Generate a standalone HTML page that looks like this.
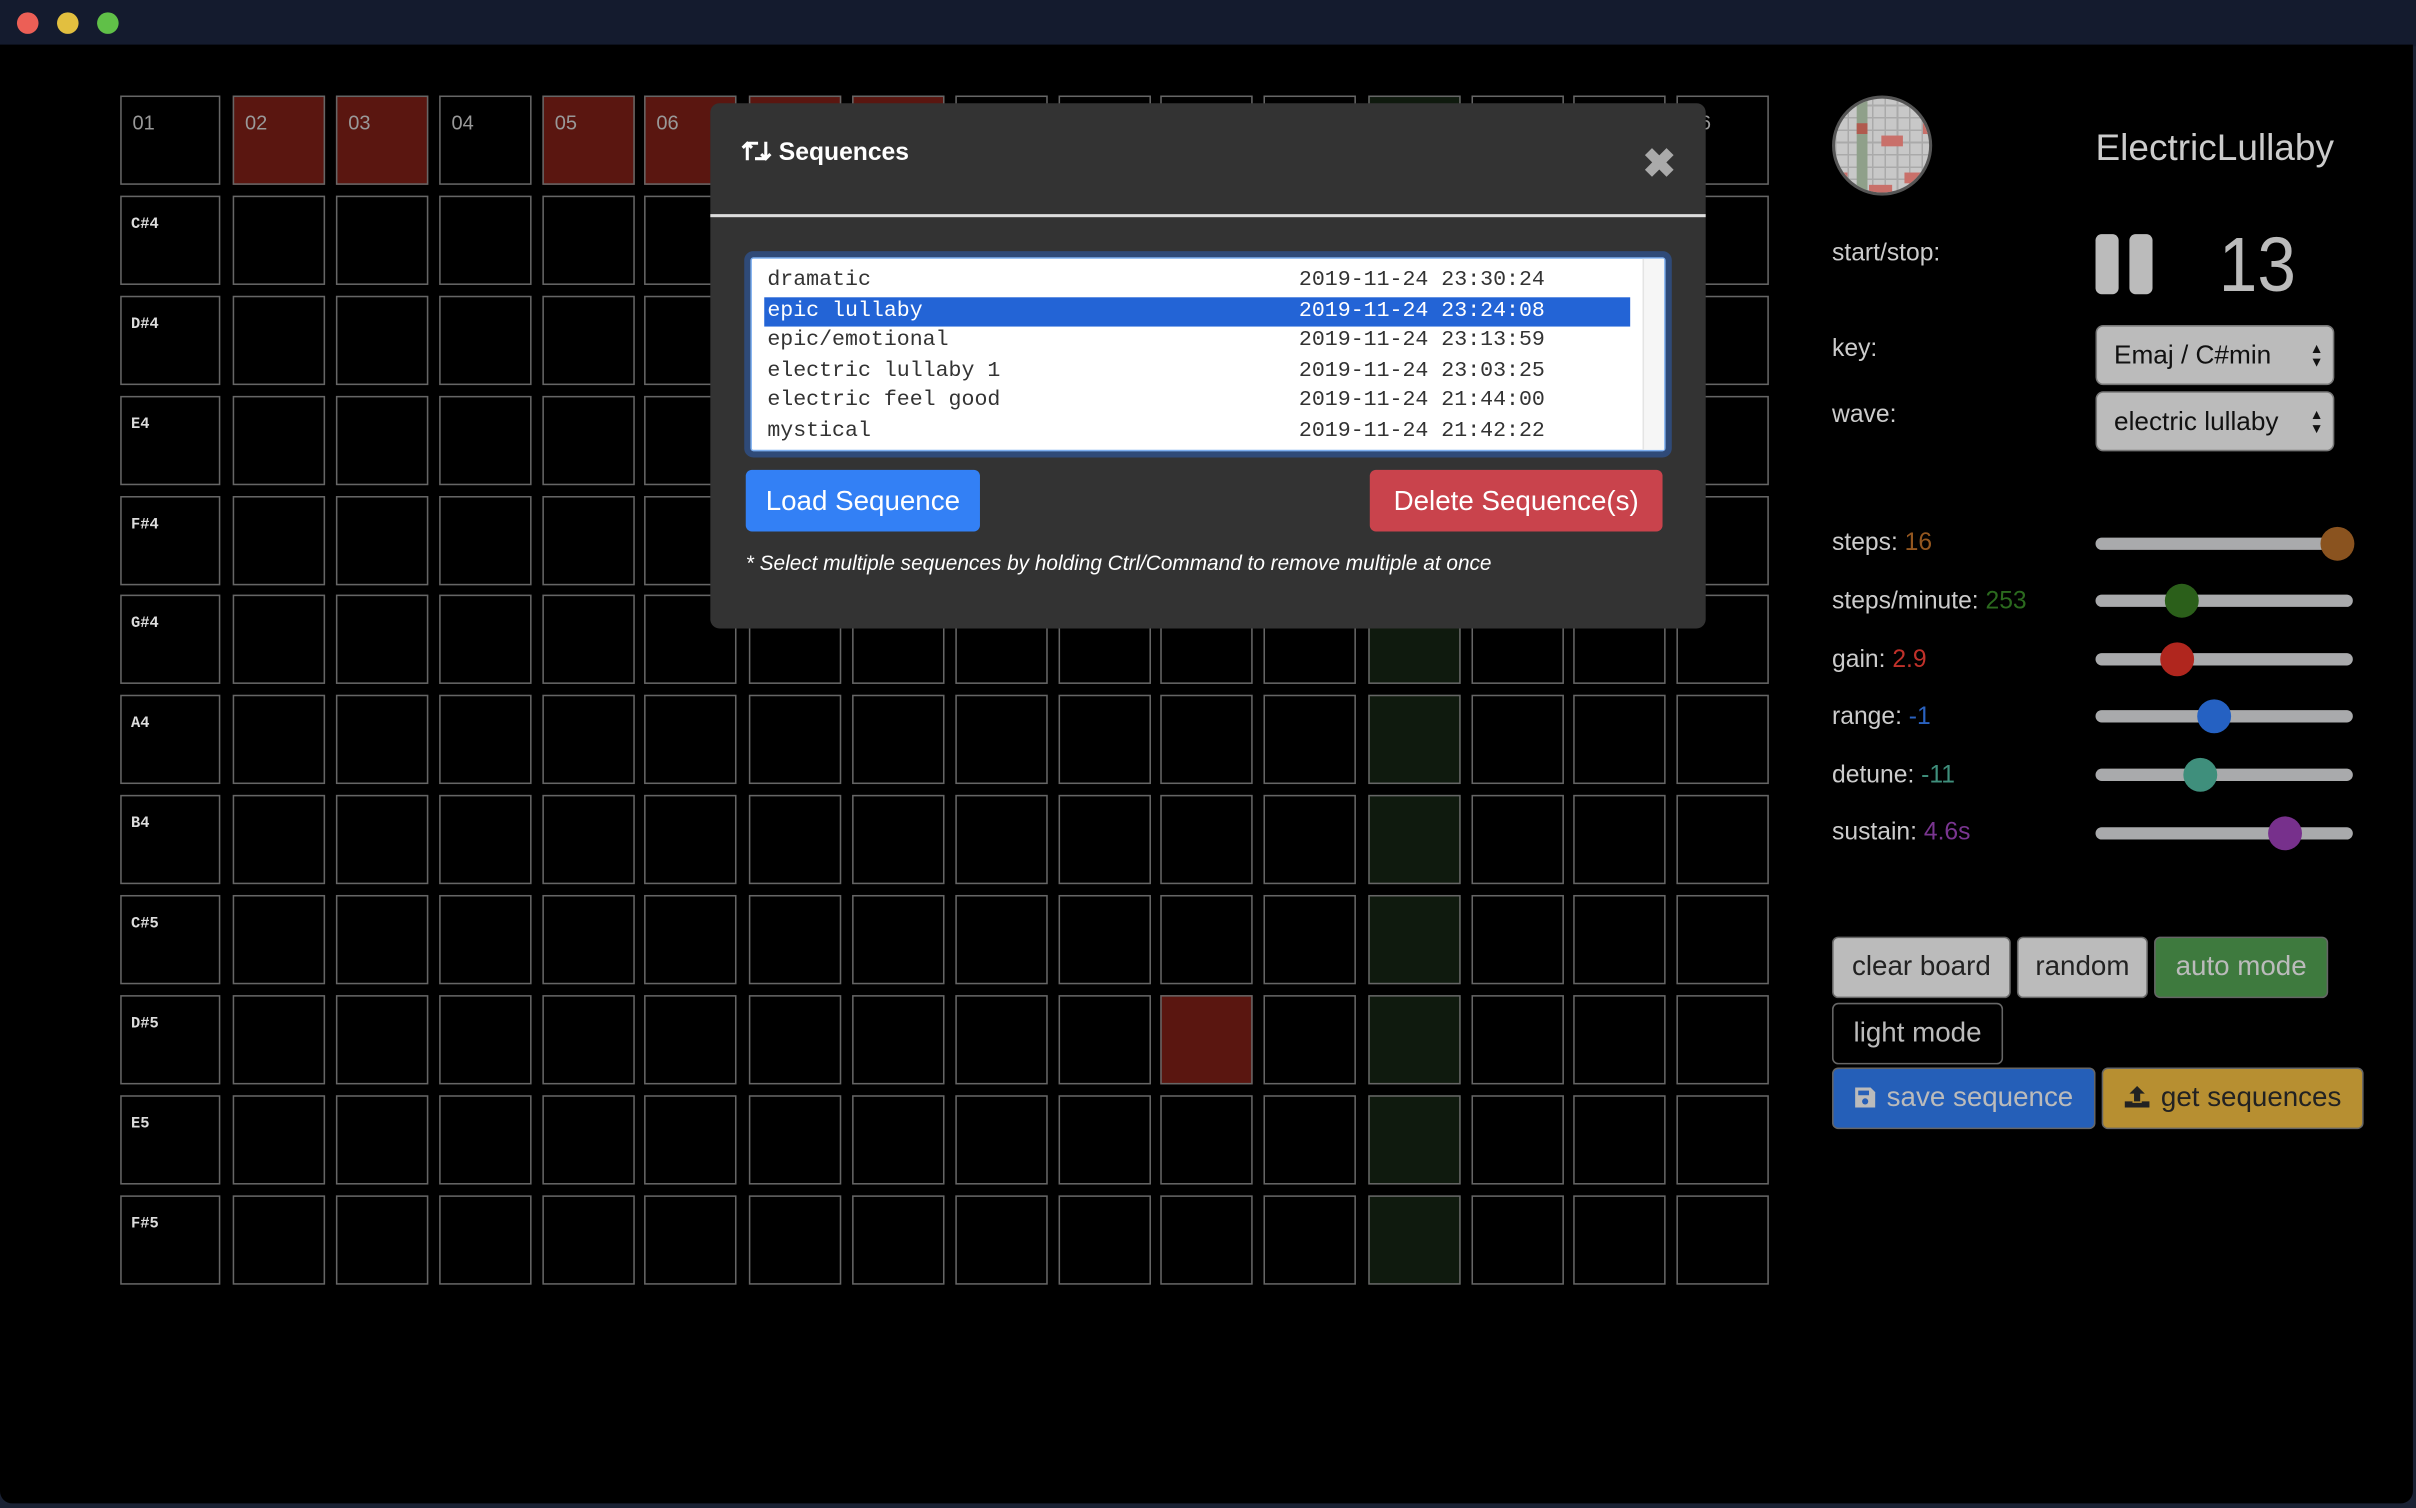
<!DOCTYPE html>
<html><head><meta charset="utf-8">
<style>
*{box-sizing:border-box;margin:0;padding:0}
html,body{width:2416px;height:1508px;overflow:hidden;background:#1a2133}
#s{position:absolute;left:0;top:0;width:1568px;height:979px;transform:scale(1.54082,1.5404);transform-origin:0 0;font-family:"Liberation Sans",sans-serif}
.tb{position:absolute;left:0;top:0;width:1568px;height:30px;background:#141b2e}
.dot{position:absolute;top:8px;width:14px;height:14px;border-radius:50%}
.win{position:absolute;left:0;top:29px;width:1566px;height:947px;background:#000;border-radius:0 0 8px 8px}
.c{position:absolute;border:1.4px solid #666;background:#000}
.hd{color:#999;font-size:13px;padding:9px 0 0 7px}
.nl{color:#ddd;font-size:10px;font-weight:bold;font-family:"Liberation Mono",monospace;padding:13px 0 0 6px}
.r{background:#5a1610}.g{background:#0f1a0e}
.modal{position:absolute;left:461px;top:67px;width:646px;height:341px;background:#333;border-radius:6px}
.lb{position:absolute;left:22px;top:96px;width:602px;height:134px;border:3px solid #2f4a78;border-radius:6px;background:#2f4a78}
.lbi{position:absolute;left:1px;top:1px;right:1px;bottom:1px;background:#fff;border:1px solid #7fb0f0;border-radius:2px;font-family:"Liberation Mono",monospace;font-size:14px;color:#333;padding:5px 0 0 8px}
.row{height:19.6px;line-height:19.6px;position:relative;width:562px;padding-left:2px}
.row span{position:absolute;left:347px}
.sel{background:#2364d6;color:#fff}
.btn{position:absolute;border-radius:4px;font-size:18px;text-align:center;line-height:40px}
.lab{position:absolute;left:1189px;color:#ccc;font-size:16px}
.trk{position:absolute;left:1360px;width:167px;height:8px;border-radius:4px;background:#a9aaac}
.th{position:absolute;width:22px;height:22px;border-radius:50%;top:-7px}
.sl{position:absolute;left:1360px;width:155px;height:39px;background:#bbb;border:1.5px solid #777;border-radius:5px;color:#111;font-size:17px;line-height:37px;padding-left:11px}
.ar{position:absolute;right:6px;top:10px;font-size:9px;line-height:9px;color:#111}
.b2{position:absolute;height:40px;border:1.5px solid #666;border-radius:4px;font-size:18px;line-height:37px;text-align:center}
.b2 svg{vertical-align:-2px;margin-right:6px}
</style></head><body><div id="s">
<div class="tb"><div class="dot" style="left:11px;background:#ec5f56"></div><div class="dot" style="left:37px;background:#e2bf3f"></div><div class="dot" style="left:63px;background:#60c048"></div></div>
<div class="win"></div>
<div id="grid"></div>
<script>
var cx=[151,218,285,352,418,486,553,620,687,753,820,888,955,1021,1088];
var ry=[62,127,192,257,322,386,451,516,581,646,711,776];
var notes=["C#4","D#4","E4","F#4","G#4","A4","B4","C#5","D#5","E5","F#5"];
var h="";
for(var r=0;r<12;r++){
 h+='<div class="c '+(r==0?'hd':'nl')+'" style="left:78px;top:'+ry[r]+'px;width:65px;height:58px">'+(r==0?'01':notes[r-1])+'</div>';
 for(var i=0;i<15;i++){
  var cls="c";
  if(r==0&&[0,1,3,4,5,6].indexOf(i)>=0)cls+=" r";
  if(i==11)cls+=" g";
  if(r==9&&i==9)cls+=" r";
  var t=r==0?String(i+2).padStart(2,"0"):"";
  h+='<div class="'+cls+(r==0?' hd':'')+'" style="left:'+cx[i]+'px;top:'+ry[r]+'px;width:60px;height:58px">'+t+'</div>';
 }
}
document.getElementById("grid").innerHTML=h;
</script>
<div class="modal">
 <div style="position:absolute;left:20px;top:24px;color:#fff;font-size:16px;font-weight:bold"><svg width="20" height="14" viewBox="0 0 20 14" style="vertical-align:-1px"><path d="M4 13V2M1 5l3-3 3 3M4 2h7M16 1v11M13 9l3 3 3-3M16 12H9" stroke="#fff" stroke-width="2" fill="none"/></svg> Sequences</div>
 <div style="position:absolute;left:605px;top:24px;color:#aaa;font-size:26px;font-weight:bold">&#10006;</div>
 <div style="position:absolute;left:0;top:72px;width:646px;height:2px;background:#ddd"></div>
 <div class="lb"><div class="lbi">
  <div style="position:absolute;right:0;top:0;bottom:0;width:14px;background:#f6f6f6;border-left:1px solid #e4e4e4"></div>
  <div class="row">dramatic<span>2019-11-24 23:30:24</span></div>
  <div class="row sel">epic lullaby<span>2019-11-24 23:24:08</span></div>
  <div class="row">epic/emotional<span>2019-11-24 23:13:59</span></div>
  <div class="row">electric lullaby 1<span>2019-11-24 23:03:25</span></div>
  <div class="row">electric feel good<span>2019-11-24 21:44:00</span></div>
  <div class="row">mystical<span>2019-11-24 21:42:22</span></div>
 </div></div>
 <div class="btn" style="left:23px;top:238px;width:152px;height:40px;background:#3380f5;color:#fff">Load Sequence</div>
 <div class="btn" style="left:428px;top:238px;width:190px;height:40px;background:#c9434c;color:#fff">Delete Sequence(s)</div>
 <div style="position:absolute;left:23px;top:291px;color:#fff;font-size:13.5px;font-style:italic">* Select multiple sequences by holding Ctrl/Command to remove multiple at once</div>
</div>
<div style="position:absolute;left:1189px;top:62px;width:65px;height:65px;border-radius:50%;border:2px solid #555;overflow:hidden;background-color:#c8c8c8;background-image:repeating-linear-gradient(90deg,#aaa 0 1px,transparent 1px 8px),repeating-linear-gradient(0deg,#aaa 0 1px,transparent 1px 8px)">
 <div style="position:absolute;left:14px;top:0;width:7px;height:65px;background:#8fa08a"></div>
 <div style="position:absolute;left:14px;top:16px;width:7px;height:7px;background:#b05a4e"></div>
 <div style="position:absolute;left:30px;top:24px;width:14px;height:7px;background:#c9706a"></div>
 <div style="position:absolute;left:57px;top:16px;width:8px;height:7px;background:#c9706a"></div>
 <div style="position:absolute;left:0;top:48px;width:8px;height:7px;background:#c9706a"></div>
 <div style="position:absolute;left:45px;top:48px;width:20px;height:7px;background:#c9706a"></div>
 <div style="position:absolute;left:22px;top:56px;width:15px;height:7px;background:#c9706a"></div>
</div>
<div style="position:absolute;left:1360px;top:83px;color:#ccc;font-size:24px">ElectricLullaby</div>
<div class="lab" style="top:156px">start/stop:</div>
<div style="position:absolute;left:1360px;top:152px;width:15px;height:39px;background:#bbb;border-radius:4px"></div>
<div style="position:absolute;left:1382px;top:152px;width:15px;height:39px;background:#bbb;border-radius:4px"></div>
<div style="position:absolute;left:1440px;top:143px;color:#bbb;font-size:50px;transform:scaleX(0.9);transform-origin:0 0">13</div>
<div class="lab" style="top:218px">key:</div>
<div class="sl" style="top:211px">Emaj / C#min<div class="ar">&#9650;<br>&#9660;</div></div>
<div class="lab" style="top:261px">wave:</div>
<div class="sl" style="top:254px">electric lullaby<div class="ar">&#9650;<br>&#9660;</div></div>
<div class="lab" style="top:344px">steps: <span style="color:#93561f">16</span></div>
<div class="trk" style="top:349px"><div class="th" style="left:146px;background:#8a531f"></div></div>
<div class="lab" style="top:382px">steps/minute: <span style="color:#2b6a1e">253</span></div>
<div class="trk" style="top:386px"><div class="th" style="left:45px;background:#2b5f1a"></div></div>
<div class="lab" style="top:420px">gain: <span style="color:#c0312a">2.9</span></div>
<div class="trk" style="top:424px"><div class="th" style="left:42px;background:#b0261e"></div></div>
<div class="lab" style="top:457px">range: <span style="color:#2a62c0">-1</span></div>
<div class="trk" style="top:461px"><div class="th" style="left:66px;background:#2561c2"></div></div>
<div class="lab" style="top:495px">detune: <span style="color:#3f8f7c">-11</span></div>
<div class="trk" style="top:499px"><div class="th" style="left:57px;background:#3f8f7c"></div></div>
<div class="lab" style="top:532px">sustain: <span style="color:#7a3590">4.6s</span></div>
<div class="trk" style="top:537px"><div class="th" style="left:112px;background:#77308c"></div></div>
<div class="b2" style="left:1189px;top:608px;width:116px;background:#bbb;color:#222">clear board</div>
<div class="b2" style="left:1309px;top:608px;width:85px;background:#bbb;color:#222">random</div>
<div class="b2" style="left:1398px;top:608px;width:113px;background:#3e7a3e;color:#bbb">auto mode</div>
<div class="b2" style="left:1189px;top:651px;width:111px;background:#000;color:#bbb">light mode</div>
<div class="b2" style="left:1189px;top:693px;width:171px;background:#255fb8;color:#bbb"><svg width="15" height="15" viewBox="0 0 15 15"><path d="M1 1h10l3 3v10H1z" fill="#bbb"/><rect x="3" y="3" width="7" height="3" fill="#255fb8"/><circle cx="7.5" cy="10" r="2" fill="#255fb8"/></svg>save sequence</div>
<div class="b2" style="left:1364px;top:693px;width:170px;background:#b78f31;color:#222"><svg width="18" height="16" viewBox="0 0 18 16"><path d="M9 1l5 5h-3v5H7V6H4z" fill="#222"/><path d="M1 11h5v1h6v-1h5v4H1z" fill="#222"/></svg>get sequences</div>
</div></body></html>
